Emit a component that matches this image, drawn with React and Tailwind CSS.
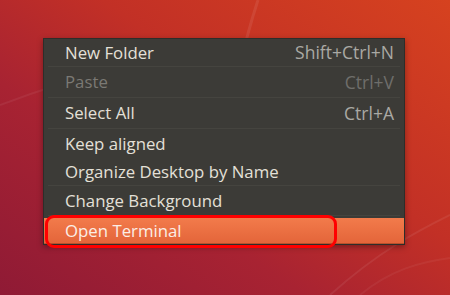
import React from 'react'

const items = [
    { label: 'New Folder', shortcut: 'Shift+Ctrl+N', h: 'h-[27px]', sep: true },
    { label: 'Paste', shortcut: 'Ctrl+V', h: 'h-[30px]', sep: true, disabled: true },
    { label: 'Select All', shortcut: 'Ctrl+A', h: 'h-[30px]', sep: true },
    { label: 'Keep aligned', h: 'h-[29px]' },
    { label: 'Organize Desktop by Name', h: 'h-[27px]', sep: true },
    { label: 'Change Background', h: 'h-[29px]', sep: true },
]

const Wallpaper = () => (
    <svg className="absolute inset-0" width="450" height="295" viewBox="0 0 450 295">
        <path d="M258 0 C 245 40, 235 80, 230 130" stroke="#ffffff" strokeOpacity="0.08" strokeWidth="3" fill="none" />
        <path d="M0 105 C 40 90, 70 80, 110 70" stroke="#ffffff" strokeOpacity="0.06" strokeWidth="2" fill="none" />
        <path d="M330 295 C 380 250, 420 230, 450 215" stroke="#ffffff" strokeOpacity="0.07" strokeWidth="2" fill="none" />
        <path d="M360 295 C 390 270, 420 262, 450 258" stroke="#ffffff" strokeOpacity="0.05" strokeWidth="2" fill="none" />
    </svg>
)

const App = () => {
    return (
        <div className="relative w-[450px] h-[295px] overflow-hidden bg-[linear-gradient(35deg,#8f1a35_0%,#a82332_35%,#c23026_60%,#d6421f_100%)]"
            style={{ fontFamily: '"Open Sans", "DejaVu Sans", sans-serif' }}>
            <Wallpaper />

            <div className="relative ml-[43px] pt-[38px]">
                <div className="w-[362px] bg-[#3c3b37] border border-[#2e2d2a] shadow-[0_2px_6px_rgba(0,0,0,0.35)] flex flex-col">
                    {items.map((it) => (
                        <React.Fragment key={it.label}>
                            <div className={`${it.h} flex items-center justify-between pl-[21px] pr-[10px] text-[16.8px]`}>
                                <span className={it.disabled ? 'text-[#7b7974]' : 'text-[#e4e0d8]'}>{it.label}</span>
                                {it.shortcut && (
                                    <span className={`text-[17.5px] ${it.disabled ? 'text-[#6f6e6b]' : 'text-[#aaa9a4]'}`}>{it.shortcut}</span>
                                )}
                            </div>
                            {it.sep && <div className="h-px mx-[4px] bg-[#34332f] border-b border-[#45443f]" />}
                        </React.Fragment>
                    ))}
                    <div className="h-[2px]" />
                    <div className="relative h-[26px] flex items-center pl-[21px] text-[16.8px] text-[#fbeee6] bg-[linear-gradient(#f27b4b,#e4653a)] border-b border-[#b8502c]">
                        Open Terminal
                        <div className="absolute left-[1px] top-[-3px] w-[292px] h-[33px] border-[3px] border-[#ff0000] rounded-[9px]" />
                    </div>
                </div>
            </div>
        </div>
    )
}

export default App
